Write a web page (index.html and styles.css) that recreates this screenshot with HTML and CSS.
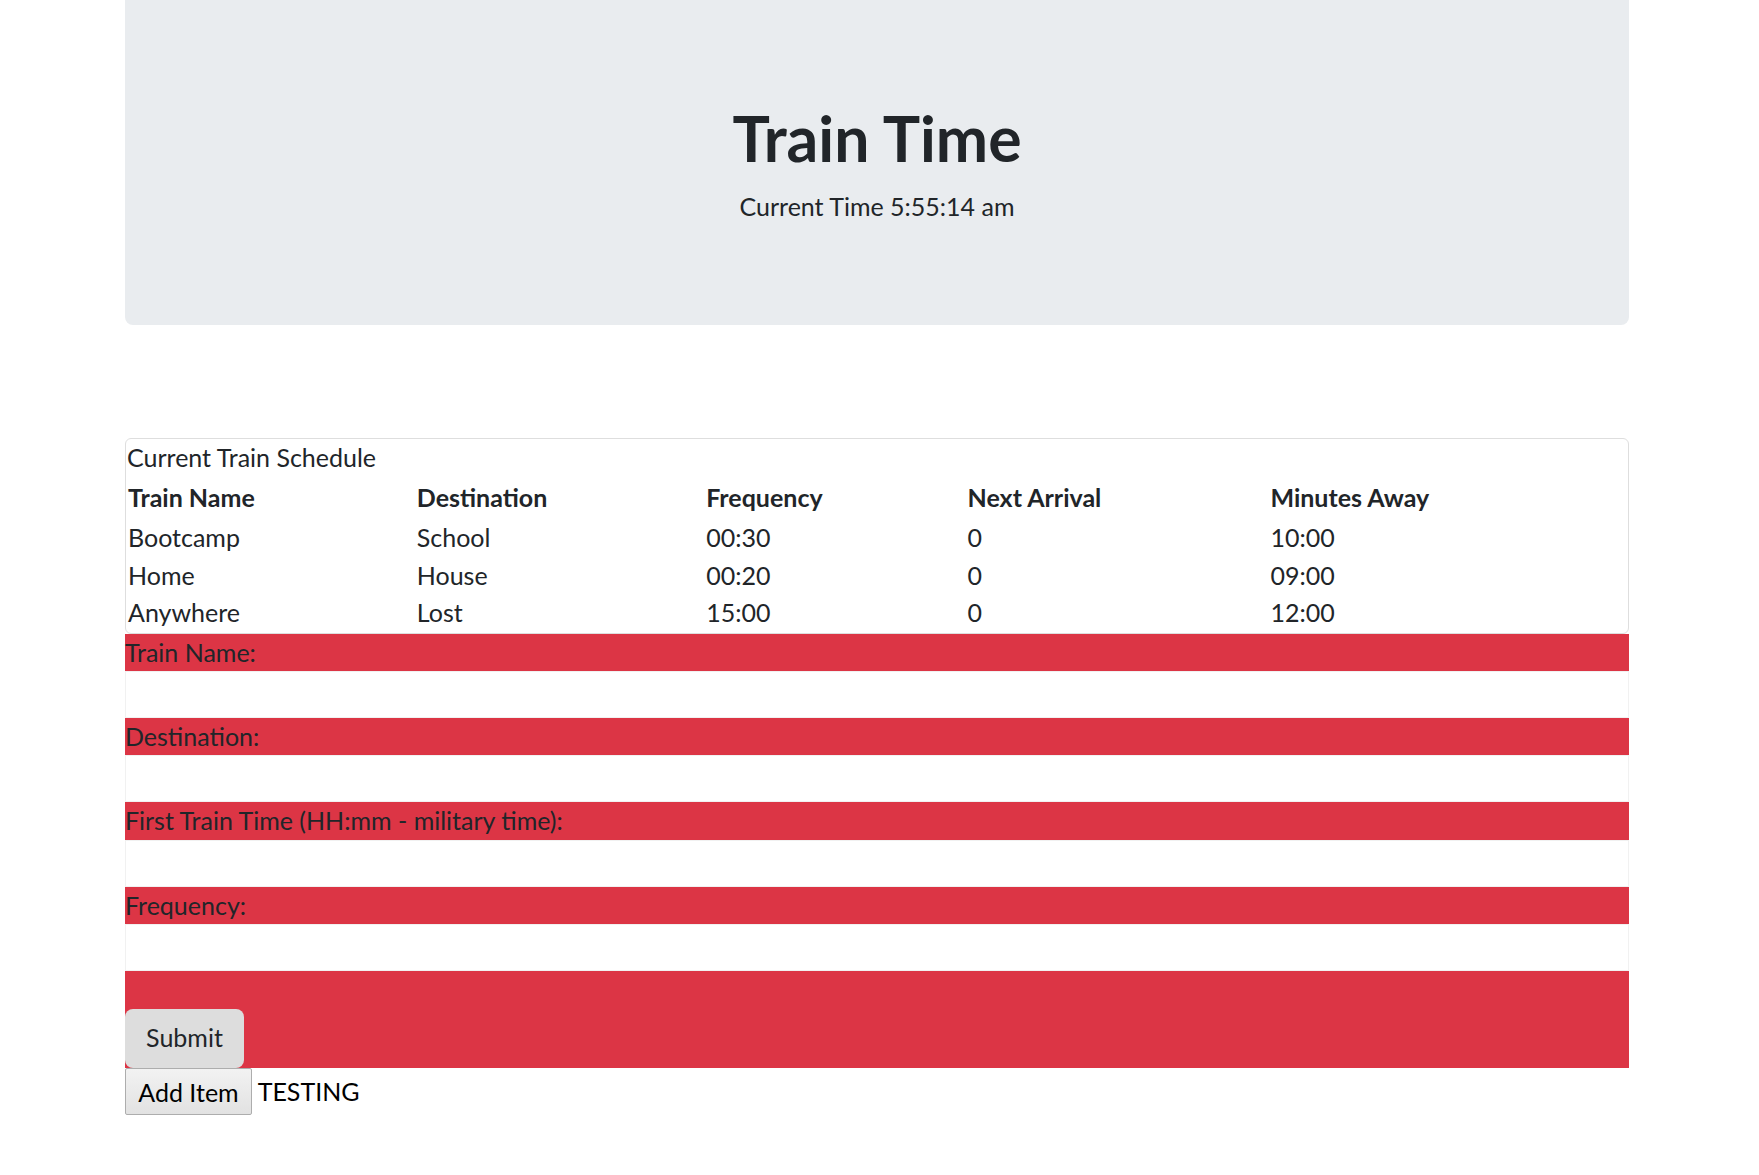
FILE: index.html
```html
<!DOCTYPE html>
<html lang="en">
<head>
<meta charset="utf-8">
<title>Train Time</title>
<link rel="stylesheet" href="styles.css">
</head>
<body>
<div class="container">
  <header class="jumbotron">
    <h1 class="title">Train Time</h1>
    <div class="clock">Current Time 5:55:14 am</div>
  </header>

  <div class="panel">
    <table class="schedule">
      <caption>Current Train Schedule</caption>
      <thead>
        <tr><th>Train Name</th><th>Destination</th><th>Frequency</th><th>Next Arrival</th><th>Minutes Away</th></tr>
      </thead>
      <tbody>
        <tr><td>Bootcamp</td><td>School</td><td>00:30</td><td>0</td><td>10:00</td></tr>
        <tr><td>Home</td><td>House</td><td>00:20</td><td>0</td><td>09:00</td></tr>
        <tr><td>Anywhere</td><td>Lost</td><td>15:00</td><td>0</td><td>12:00</td></tr>
      </tbody>
    </table>
  </div>

  <form class="train-form">
    <label class="field-label" for="name">Train Name:</label>
    <input class="field-input" id="name" type="text">
    <label class="field-label" for="dest">Destination:</label>
    <input class="field-input" id="dest" type="text">
    <label class="field-label" for="first">First Train Time (HH:mm - military time):</label>
    <input class="field-input" id="first" type="text">
    <label class="field-label" for="freq">Frequency:</label>
    <input class="field-input" id="freq" type="text">
    <div class="submit-row">
      <button type="button" class="submit-btn">Submit</button>
    </div>
  </form>

  <div class="extra"><button type="button" class="add-btn">Add Item</button> TESTING</div>
</div>
</body>
</html>
```
FILE: styles.css
```css
html, body {
  margin: 0;
  padding: 0;
  background: #ffffff;
}
body {
  font-family: "Lato", "Open Sans", "Liberation Sans", sans-serif;
  font-size: 25px;
  line-height: 37.5px;
  color: #212529;
}
.container {
  width: 1504px;
  margin-left: 125px;
}
.jumbotron {
  background: #e9ecef;
  border-radius: 0 0 8px 8px;
  padding: 100px 50px;
  text-align: center;
  margin-bottom: 113px;
}
.title {
  margin: 0 0 12.5px;
  font-size: 62.5px;
  line-height: 75px;
  font-weight: 700;
  color: #212529;
}
.clock {
  font-size: 25px;
  line-height: 37.5px;
}
.panel {
  border: 1.5px solid #dedede;
  border-radius: 6px;
  overflow: hidden;
}
.schedule {
  width: 100%;
  border-collapse: collapse;
  table-layout: fixed;
}
.schedule caption {
  caption-side: top;
  text-align: left;
  padding: 0 0 0 1px;
  color: #212529;
}
.schedule th {
  text-align: left;
  font-weight: 700;
  padding: 2px 2px 3px;
}
.schedule td {
  padding: 0 2px;
}
.schedule tbody tr:last-child td {
  padding-bottom: 1px;
}
.schedule th:nth-child(1) { width: 284.8px; }
.schedule th:nth-child(2) { width: 285.4px; }
.schedule th:nth-child(3) { width: 257.4px; }
.schedule th:nth-child(4) { width: 298.9px; }
.train-form {
  display: flex;
  flex-direction: column;
}
.field-label {
  display: block;
  background: #dc3545;
  color: #212529;
  line-height: 37.5px;
  height: 37.5px;
}
.field-input {
  display: block;
  box-sizing: border-box;
  width: 100%;
  height: 46.9px;
  margin: 0;
  border: 1px solid #f1f1f1;
  background: #ffffff;
  font: inherit;
}
.submit-row {
  background: #dc3545;
  padding-top: 37.5px;
  display: flex;
}
.submit-btn {
  font: inherit;
  line-height: 30px;
  color: #212529;
  background: #dddddd;
  border: none;
  border-radius: 8px;
  height: 59px;
  width: 119px;
  padding: 0 0 3px;
}
.extra {
  line-height: 47px;
  color: #000;
}
.add-btn {
  font: inherit;
  color: #000;
  height: 47px;
  width: 127px;
  padding: 0;
  border: 1.5px solid #adadad;
  border-radius: 2px;
  background: linear-gradient(#f2f2f2, #e2e2e2);
  vertical-align: top;
}
```
